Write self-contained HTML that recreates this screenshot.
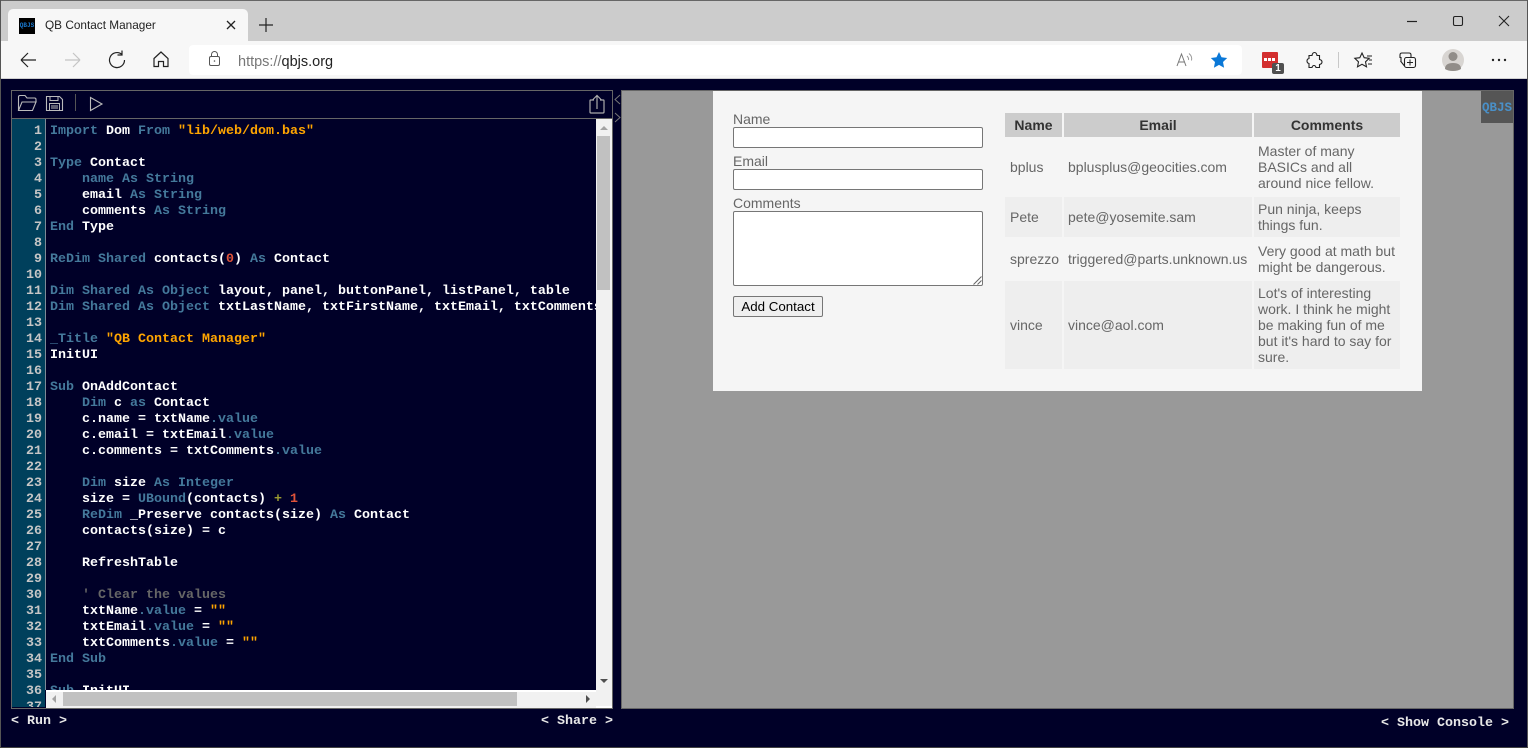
<!DOCTYPE html>
<html><head><meta charset="utf-8"><style>
html,body{margin:0;padding:0;width:1528px;height:748px;overflow:hidden;background:#000028;font-family:"Liberation Sans",sans-serif}
.a{position:absolute}
svg{position:absolute;overflow:visible;fill:none}
#code,#nums{position:absolute;font:bold 13.33px/16px "Liberation Mono",monospace;white-space:pre;color:#fff}
#nums{left:12px;width:30px;text-align:right;color:#c6c6c6}
#code{left:50px}
i{font-style:normal;color:#44799b;font-weight:bold}
b{font-weight:bold;color:#ffa500}
u{text-decoration:none;color:#e0533a}
.c{color:#666;font-weight:bold}
.lb{position:absolute;font-size:14px;line-height:16px;color:#666}
.inp{position:absolute;left:733px;width:248px;background:#fff;border:1px solid #767676;border-radius:2px}
.th{position:absolute;top:113px;height:24px;background:#ccc;color:#333;font:bold 14px/24px "Liberation Sans",sans-serif;text-align:center}
.bg{position:absolute;background:#eee}
.t{position:absolute;font-size:14px;line-height:16px;color:#666;white-space:pre}
.m{position:absolute;font:bold 13.33px/16px "Liberation Mono",monospace;color:#e8e8e8;white-space:pre}
</style></head><body>
<div class="a" style="left:0;top:0;width:1528px;height:41px;background:#ccc;border-top:1px solid #666;box-sizing:border-box"></div>
<div class="a" style="left:0;top:41px;width:1528px;height:38px;background:#f7f7f7;border-bottom:1px solid #d0d0d0;box-sizing:border-box"></div>
<div class="a" style="left:0;top:0;width:1px;height:748px;background:#555"></div>
<div class="a" style="left:1527px;top:0;width:1px;height:748px;background:#555"></div>
<div class="a" style="left:0;top:747px;width:1528px;height:1px;background:#444"></div>
<div class="a" style="left:8px;top:9px;width:240px;height:32px;background:#f7f7f7;border-radius:5px 5px 0 0"></div>
<div class="a" style="left:19px;top:18px;width:16px;height:16px;background:#000;color:#1a7ad0;font:bold 6px/16px 'Liberation Mono',monospace;text-align:center">QBJS</div>
<div class="a" style="left:45px;top:17px;font-size:11.8px;line-height:16px;color:#222">QB Contact Manager</div>
<div class="a" style="left:189px;top:45px;width:1053px;height:30px;background:#fff;border-radius:4px"></div>
<div class="a" style="left:238px;top:54px;font-size:14.5px;line-height:16px;color:#222"><span style="color:#777">https://</span>qbjs.org</div>
<svg style="left:0;top:0" width="1528" height="80">
<path d="M227 21l8 8M235 21l-8 8" stroke="#222" stroke-width="1.3"/>
<path d="M266 18v14M259 25h14" stroke="#222" stroke-width="1.2"/>
<path d="M21 60h15M21 60l7-7M21 60l7 7" stroke="#222" stroke-width="1.2"/>
<path d="M65 60h15M80 60l-7-7M80 60l-7 7" stroke="#c4c4c4" stroke-width="1.2"/>
<path d="M122 54.500a7.500 7.500 0 1 0 2.500 5.500M122 50.500v4.500h-4.500" stroke="#222" stroke-width="1.2"/>
<path d="M154 58.500l7-6.500 7 6.500v8h-4.500v-5h-5v5H154z" stroke="#222" stroke-width="1.2"/>
<rect x="209.500" y="56.500" width="10" height="9" rx="1.500" stroke="#555"/><path d="M211.500 56.500v-2a3 3 0 0 1 6 0v2" stroke="#555"/><circle cx="214.500" cy="61" r=".8" fill="#555"/>
<path d="M1177 66l4.500-12 4.500 12M1178.500 62h6" stroke="#777"/><path d="M1187 56q2 2 1.500 4M1189 53.500q3.500 3 2.500 7" stroke="#999"/>
<path d="M1219 52l2.500 5.300 5.700.7-4.200 4 1.100 5.800-5.100-2.900-5.100 2.900 1.100-5.800-4.200-4 5.700-.7z" fill="#0a78d7"/>
<path d="M1309 55.500H1312Q1312.500 52.500 1314.500 52.500T1317 55.500H1319.500V59.500Q1322 60 1322 62T1319.500 64.500V67.500H1316Q1315.500 65.500 1314 65.500T1312 67.500H1309V63.500Q1307 63 1307 61T1309 58.500Z" stroke="#222" stroke-width="1.100"/>
<path d="M1338.500 52v16" stroke="#c8c8c8"/>
<path d="M1362 53l2.200 4.700 5 .6-3.700 3.500 1 5-4.500-2.500-4.500 2.500 1-5-3.700-3.500 5-.6z" stroke="#222" stroke-width="1.1"/><path d="M1367 56h5M1369 60h3M1368 64h4" stroke="#222"/>
<path d="M1400 58v-3q0-2 2-2h7q2 0 2 2v2" stroke="#222" stroke-width="1.1"/><path d="M1401 62v-5M1400.500 61l4 5" stroke="#222" stroke-width="1.1"/><rect x="1404.500" y="57.500" width="11" height="10" rx="2" stroke="#222" stroke-width="1.1"/><path d="M1410 59.500v6M1407 62.500h6" stroke="#222"/>
<circle cx="1453" cy="60" r="11" fill="#d8d5d2"/><circle cx="1453" cy="56.500" r="4.500" fill="#918d89"/><path d="M1445 69q0-6 8-6t8 6q-3 2-8 2t-8-2z" fill="#918d89"/>
<circle cx="1493" cy="60" r="1.200" fill="#222"/><circle cx="1499" cy="60" r="1.200" fill="#222"/><circle cx="1505" cy="60" r="1.200" fill="#222"/>
<path d="M1407 21.500h10" stroke="#222" stroke-width="1.2"/><rect x="1453.500" y="16.500" width="9" height="9" rx="1.500" stroke="#222" stroke-width="1.1"/><path d="M1499 16l10 10M1509 16l-10 10" stroke="#222" stroke-width="1.1"/>
</svg>
<div class="a" style="left:1262px;top:52px;width:16px;height:16px;background:#d32f2f;border-radius:1px"></div>
<div class="a" style="left:1264px;top:58px;width:3px;height:3px;background:#fff;box-shadow:4px 0 #fff,8px 0 #fff"></div>
<div class="a" style="left:1272px;top:63px;width:12px;height:11px;background:#505050;border-radius:2px;color:#fff;font:bold 10px/11px 'Liberation Sans',sans-serif;text-align:center">1</div>

<!-- toolbar -->
<div class="a" style="left:11px;top:90px;width:602px;height:29px;border:1px solid #666;box-sizing:border-box;background:#000028"></div>
<svg style="left:0;top:0" width="620" height="130">
<path d="M18.500 110v-13q0-1.500 1.500-1.500h5l2 2.500h7.500q1.500 0 1.500 1.500V102M18.500 110.500h14l3.500-8.500H22z" stroke="#bbb" stroke-width="1.100"/>
<path d="M46.500 96.500h13l3 3v11h-16z" stroke="#bbb" stroke-width="1.100"/><path d="M50 96.500v4h8v-4M49.500 110v-6.500h10v6.500M51 106h7M51 108h7" stroke="#bbb"/>
<path d="M75.500 94v17" stroke="#555"/>
<path d="M90.500 97.500l11.500 6.500-11.500 6.500z" stroke="#bbb" stroke-width="1.100"/>
<path d="M594 100h-3.500q-.500 0-.500 1v11q0 1 1 1h12q1 0 1-1v-11q0-1-.5-1H600M597 109V96M592.500 100l4.500-4.500 4.500 4.500" stroke="#aaa" stroke-width="1.200"/>
<path d="M620 95l-5 4.500 5 4.500M615 113l5 4.500-5 4.500" stroke="#777" stroke-width="1"/>
</svg>

<!-- editor -->
<div class="a" style="left:11px;top:119px;width:602px;height:590px;background:#000028;border:1px solid #666;border-top:0;box-sizing:border-box"></div>
<div class="a" style="left:12px;top:119px;width:33px;height:588px;background:#00405c"></div>
<div class="a" style="left:45px;top:119px;width:1px;height:571px;background:#7d8a96"></div>
<div class="a" style="left:0;top:119px;width:596px;height:588px;overflow:hidden">
<div id="nums" style="top:5px">1
2
3
4
5
6
7
8
9
10
11
12
13
14
15
16
17
18
19
20
21
22
23
24
25
26
27
28
29
30
31
32
33
34
35
36
37</div>
<div id="code" style="top:5px;width:546px;height:566px;overflow:hidden"><i>Import</i> Dom <i>From</i> <b>"lib/web/dom.bas"</b>

<i>Type</i> Contact
    <i>name</i> <i>As</i> <i>String</i>
    email <i>As</i> <i>String</i>
    comments <i>As</i> <i>String</i>
<i>End</i> Type

<i>ReDim</i> <i>Shared</i> contacts(<u>0</u>) <i>As</i> Contact

<i>Dim</i> <i>Shared</i> <i>As</i> <i>Object</i> layout, panel, buttonPanel, listPanel, table
<i>Dim</i> <i>Shared</i> <i>As</i> <i>Object</i> txtLastName, txtFirstName, txtEmail, txtComments

<i>_Title</i> <b>"QB Contact Manager"</b>
InitUI

<i>Sub</i> OnAddContact
    <i>Dim</i> c <i>as</i> Contact
    c.name = txtName<i>.value</i>
    c.email = txtEmail<i>.value</i>
    c.comments = txtComments<i>.value</i>

    <i>Dim</i> size <i>As</i> <i>Integer</i>
    size = <i>UBound</i>(contacts) <span style="color:#9a9a30">+</span> <u>1</u>
    <i>ReDim</i> _Preserve contacts(size) <i>As</i> Contact
    contacts(size) = c

    RefreshTable

    <span class="c">' Clear the values</span>
    txtName<i>.value</i> = <b>""</b>
    txtEmail<i>.value</i> = <b>""</b>
    txtComments<i>.value</i> = <b>""</b>
<i>End</i> <i>Sub</i>

<i>Sub</i> InitUI</div>
</div>

<!-- scrollbars -->
<div class="a" style="left:596px;top:119px;width:16px;height:589px;background:#f1f1f1"></div>
<div class="a" style="left:597px;top:136px;width:13px;height:154px;background:#c1c1c1"></div>
<div class="a" style="left:600px;top:126px;width:0;height:0;border:4px solid transparent;border-top:0;border-bottom:4px solid #a3a3a3"></div>
<div class="a" style="left:600px;top:679px;width:0;height:0;border:4px solid transparent;border-bottom:0;border-top:4px solid #505050"></div>
<div class="a" style="left:46px;top:690px;width:550px;height:18px;background:#f1f1f1;border-top:2px solid #fff;box-sizing:border-box"></div>
<div class="a" style="left:63px;top:692px;width:454px;height:14px;background:#c1c1c1"></div>
<div class="a" style="left:52px;top:695px;width:0;height:0;border:4px solid transparent;border-left:0;border-right:4px solid #a3a3a3"></div>
<div class="a" style="left:586px;top:695px;width:0;height:0;border:4px solid transparent;border-right:0;border-left:4px solid #505050"></div>
<div class="a" style="left:596px;top:706px;width:16px;height:2px;background:#fff"></div>

<!-- footer labels -->
<div class="m" style="left:11px;top:714px">&lt; Run &gt;</div>
<div class="m" style="left:541px;top:714px">&lt; Share &gt;</div>
<div class="m" style="left:1381px;top:716px">&lt; Show Console &gt;</div>

<!-- preview -->
<div class="a" style="left:621px;top:90px;width:893px;height:619px;background:#999;border:1px solid #666;box-sizing:border-box"></div>
<div class="a" style="left:713px;top:91px;width:709px;height:300px;background:#f5f5f5"></div>
<div class="a" style="left:1481px;top:91px;width:32px;height:32px;background:#555;color:#4a90c8;font:bold 12.5px/34px 'Liberation Mono',monospace;text-align:center;overflow:hidden">QBJS</div>

<div class="lb" style="left:733px;top:111px">Name</div>
<div class="inp" style="top:127px;height:19px"></div>
<div class="lb" style="left:733px;top:153px">Email</div>
<div class="inp" style="top:169px;height:19px"></div>
<div class="lb" style="left:733px;top:195px">Comments</div>
<div class="inp" style="top:211px;height:73px"></div>
<svg style="left:0;top:0" width="1000" height="300"><path d="M973.500 284.500l8-8M977.500 284.500l4-4" stroke="#666"/></svg>
<div class="a" style="left:733px;top:296px;width:88px;height:19px;background:#efefef;border:1px solid #767676;border-radius:2px;color:#000;font:13.33px/19px 'Liberation Sans',sans-serif;text-align:center">Add Contact</div>

<div class="th" style="left:1005px;width:57px">Name</div>
<div class="th" style="left:1064px;width:188px">Email</div>
<div class="th" style="left:1254px;width:146px">Comments</div>
<div class="bg" style="left:1005px;top:197px;width:57px;height:40px"></div>
<div class="bg" style="left:1064px;top:197px;width:188px;height:40px"></div>
<div class="bg" style="left:1254px;top:197px;width:146px;height:40px"></div>
<div class="bg" style="left:1005px;top:281px;width:57px;height:88px"></div>
<div class="bg" style="left:1064px;top:281px;width:188px;height:88px"></div>
<div class="bg" style="left:1254px;top:281px;width:146px;height:88px"></div>

<div class="t" style="left:1010px;top:159px">bplus</div>
<div class="t" style="left:1068px;top:159px">bplusplus@geocities.com</div>
<div class="t" style="left:1258px;top:143px">Master of many
BASICs and all
around nice fellow.</div>
<div class="t" style="left:1010px;top:209px">Pete</div>
<div class="t" style="left:1068px;top:209px">pete@yosemite.sam</div>
<div class="t" style="left:1258px;top:201px">Pun ninja, keeps
things fun.</div>
<div class="t" style="left:1010px;top:251px">sprezzo</div>
<div class="t" style="left:1068px;top:251px">triggered@parts.unknown.us</div>
<div class="t" style="left:1258px;top:243px">Very good at math but
might be dangerous.</div>
<div class="t" style="left:1010px;top:317px">vince</div>
<div class="t" style="left:1068px;top:317px">vince@aol.com</div>
<div class="t" style="left:1258px;top:285px">Lot's of interesting
work. I think he might
be making fun of me
but it's hard to say for
sure.</div>
</body></html>
